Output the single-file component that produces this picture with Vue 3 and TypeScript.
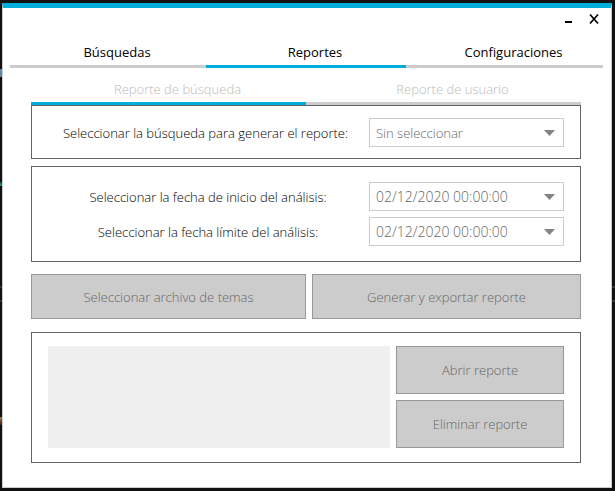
<script setup lang="ts">
import { ref } from 'vue'

interface DateField {
  id: string
  label: string
  value: string
}

const tabs: string[] = ['Búsquedas', 'Reportes', 'Configuraciones']
const subTabs: string[] = ['Reporte de búsqueda', 'Reporte de usuario']
const activeTab = ref(1)
const activeSubTab = ref(0)

const search = ref('Sin seleccionar')
const dates = ref<DateField[]>([
  { id: 'start', label: 'Seleccionar la fecha de inicio del análisis:', value: '02/12/2020 00:00:00' },
  { id: 'end', label: 'Seleccionar la fecha límite del análisis:', value: '02/12/2020 00:00:00' },
])
</script>

<template>
  <div class="desktop">
    <main class="window">
      <header class="titlebar">
        <button type="button" aria-label="Minimizar">
          <svg width="12" height="12" viewBox="0 0 12 12"><path d="M3 9h7" stroke="#000" stroke-width="2" /></svg>
        </button>
        <button type="button" aria-label="Cerrar">
          <svg width="12" height="12" viewBox="0 0 12 12"><path d="M2 1.5l8 9M10 1.5l-8 9" fill="none" stroke="#000" stroke-width="1.7" /></svg>
        </button>
      </header>

      <nav class="tabs">
        <button
          v-for="(tab, i) in tabs"
          :key="tab"
          type="button"
          :class="{ active: i === activeTab }"
          @click="activeTab = i"
        >{{ tab }}</button>
      </nav>

      <div class="content">
        <nav class="tabs subtabs">
          <button
            v-for="(tab, i) in subTabs"
            :key="tab"
            type="button"
            :class="{ active: i === activeSubTab }"
            @click="activeSubTab = i"
          >{{ tab }}</button>
        </nav>

        <section class="panel search">
          <div class="field">
            <label for="search">Seleccionar la búsqueda para generar el reporte:</label>
            <div class="combo">
              <select id="search" v-model="search">
                <option>Sin seleccionar</option>
              </select>
              <svg width="11" height="6" viewBox="0 0 11 6"><path d="M0 0h11L5.500 6z" fill="#838383" /></svg>
            </div>
          </div>
        </section>

        <section class="panel dates">
          <div v-for="date in dates" :key="date.id" class="field">
            <label :for="date.id">{{ date.label }}</label>
            <div class="combo">
              <select :id="date.id" v-model="date.value">
                <option>02/12/2020 00:00:00</option>
              </select>
              <svg width="11" height="6" viewBox="0 0 11 6"><path d="M0 0h11L5.500 6z" fill="#838383" /></svg>
            </div>
          </div>
        </section>

        <div class="actions">
          <button type="button" class="action" disabled>Seleccionar archivo de temas</button>
          <button type="button" class="action" disabled>Generar y exportar reporte</button>
        </div>

        <section class="panel reports">
          <div class="list" role="listbox" aria-label="Reportes"></div>
          <div class="report-actions">
            <button type="button" class="action" disabled>Abrir reporte</button>
            <button type="button" class="action" disabled>Eliminar reporte</button>
          </div>
        </section>
      </div>
    </main>
  </div>
</template>

<style>
body {
  background: #111;
}
</style>

<style scoped>
* {
  box-sizing: border-box;
}

.desktop {
  display: flex;
  min-height: 100vh;
  padding: 3px 3px 3px 2px;
  background:
    linear-gradient(#6785a8, #6785a8) 0 69px / 2px 8px no-repeat,
    linear-gradient(#164d34, #2e8b8b) 0 182px / 2px 4px no-repeat,
    linear-gradient(#333, #333) 0 286px / 100% 2px no-repeat,
    linear-gradient(#333, #333) 0 300px / 100% 2px no-repeat,
    linear-gradient(#8d8355, #4d1515) 0 417px / 2px 8px no-repeat,
    #111;
  font-family: "Open Sans", "Noto Sans", sans-serif;
  font-size: 13px;
  line-height: 18px;
  color: #000;
}

button,
select {
  margin: 0;
  padding: 0;
  border: 0;
  border-radius: 0;
  background: none;
  font: inherit;
  color: inherit;
}

.window {
  flex: 1;
  min-width: 0;
  border: 1px solid #ccc;
  border-top: 5px solid #00aedb;
  background: #fff;
}

.titlebar {
  display: flex;
  justify-content: flex-end;
  gap: 14px;
  height: 31px;
  padding: 5px 11px 0 0;
}

.titlebar button {
  display: grid;
  place-items: center;
  width: 12px;
  height: 12px;
}

.tabs {
  display: grid;
  grid-template-columns: 196fr 200fr 197fr;
  margin: 0 8px 0 7px;
}

.tabs button {
  padding: 4px 0 4px 18px;
  height: 29px;
  border-bottom: 3px solid #ccc;
}

.tabs button.active {
  border-bottom-color: #00aedb;
}

.content {
  padding: 8px 30px 24px 28px;
}

.tabs.subtabs {
  grid-template-columns: repeat(2, 1fr);
  margin: 0;
}

.subtabs button {
  font-weight: 300;
  color: #bbb;
}

.panel {
  border: 1px solid #636363;
  padding: 12px 16px 11px;
}

.field {
  display: grid;
  grid-template-columns: minmax(0, 1fr) 195px;
  align-items: center;
  gap: 6px;
}

.field label {
  text-align: center;
  font-weight: 300;
}

.combo {
  display: grid;
  grid-template-columns: 1fr 11px 9px;
  align-items: center;
}

.combo select {
  grid-area: 1 / 1 / 2 / 4;
  appearance: none;
  height: 29px;
  padding: 0 24px 0 6px;
  border: 1px solid #ccc;
  font-weight: 300;
  color: #666;
}

.combo svg {
  grid-area: 1 / 2 / 2 / 3;
  pointer-events: none;
}

.dates {
  display: grid;
  gap: 6px;
  margin-top: 7px;
  padding: 15px 16px;
}

.dates label {
  padding-left: 5px;
}

.dates select {
  font-size: 14px;
}

.actions {
  display: grid;
  grid-template-columns: 275fr 269fr;
  gap: 6px;
  margin: 12px 0 13px;
}

.action {
  height: 45px;
  border: 1px solid #999;
  background: #ccc;
  font-weight: 300;
  color: #666;
}

.reports {
  display: grid;
  grid-template-columns: minmax(0, 1fr) 168px;
  gap: 6px;
  padding: 13px 16px 14px;
}

.list {
  background: #efefef;
}

.report-actions {
  display: grid;
  gap: 6px;
}

.report-actions .action {
  height: 48px;
}
</style>
